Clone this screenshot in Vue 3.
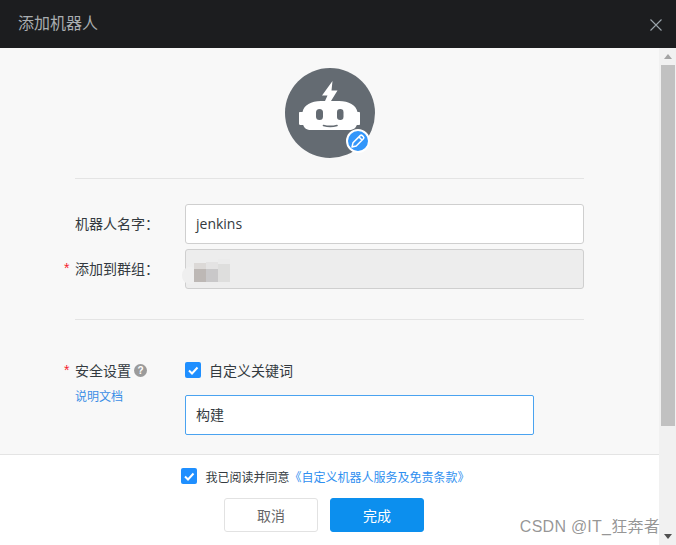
<script setup>
const checkPath = 'M4 8.5l3 3 5.5-6';
</script>

<template>
  <div class="modal">
    <header class="head">
      <span class="title">添加机器人</span>
      <svg class="close" width="14" height="14" viewBox="0 0 14 14">
        <path d="M1.5 1.5l11 11M12.5 1.5l-11 11" stroke="#9aa4ab" stroke-width="1.1" fill="none" />
      </svg>
    </header>
    <div class="frame">
      <div class="main">
        <section class="content">
          <div class="avatar-row">
            <div class="avatar">
              <svg width="90" height="90" viewBox="0 0 90 90">
                <circle cx="45" cy="45" r="45" fill="#646b72" />
                <path d="M47.500 13L37 27.500h5.500L40 33h6l6.500-10.500H46.500z" fill="#fff" />
                <path d="M36 33h18c10 0 17 4 18.500 11H74c.6 0 1 .4 1 1v11c0 .6-.4 1-1 1h-2.200c-.8 3-3.800 5-7.800 5H26c-4 0-7-2-7.800-5H16c-1 0-2-.4-2-1V45c0-.6.4-1 1-1h2.500C19 37 26 33 36 33z" fill="#fff" />
                <rect x="31" y="41" width="7" height="11" rx="3.500" fill="#646b72" />
                <rect x="52" y="41" width="6.500" height="11" rx="3.200" fill="#646b72" />
                <path d="M38.500 57.500c4.500 1.200 9 1.200 13.500 0" stroke="#646b72" stroke-width="1.600" fill="none" stroke-linecap="round" />
              </svg>
              <span class="badge">
                <svg width="16" height="16" viewBox="0 0 16 16">
                  <path d="M2 14l1-4.200 7.200-7.200a1.500 1.500 0 0 1 2.100 0l1.100 1.100a1.500 1.500 0 0 1 0 2.100L6.200 13zM9 4l3 3" stroke="#fff" stroke-width="1.500" fill="none" stroke-linejoin="round" />
                </svg>
              </span>
            </div>
          </div>
          <div class="rule"></div>
          <div class="row first">
            <label class="label">机器人名字：</label>
            <div class="input">jenkins</div>
          </div>
          <div class="row second">
            <label class="label"><i class="star">*</i>添加到群组：</label>
            <div class="input disabled">
              <span class="mosaic">
                <b class="m1"></b><b class="m2"></b><b class="m3"></b>
              </span>
            </div>
          </div>
          <div class="rule lower"></div>
          <div class="security">
            <div class="side">
              <div class="label sec-label">
                <i class="star">*</i>安全设置
                <span class="help">?</span>
              </div>
              <a class="doc">说明文档</a>
            </div>
            <div class="fields">
              <div class="check-line">
                <span class="check">
                  <svg width="16" height="16" viewBox="0 0 16 16"><path :d="checkPath" stroke="#fff" stroke-width="2" fill="none" /></svg>
                </span>
                <span>自定义关键词</span>
              </div>
              <div class="input keyword">构建</div>
            </div>
          </div>
        </section>
        <footer class="foot">
          <div class="agree">
            <span class="check">
              <svg width="16" height="16" viewBox="0 0 16 16"><path :d="checkPath" stroke="#fff" stroke-width="2" fill="none" /></svg>
            </span>
            <span class="agree-text">我已阅读并同意</span>
            <a class="terms">《自定义机器人服务及免责条款》</a>
          </div>
          <div class="btns">
            <button class="btn cancel">取消</button>
            <button class="btn ok">完成</button>
          </div>
        </footer>
      </div>
      <div class="scrollbar">
        <span class="arrow up"></span>
        <span class="thumb"></span>
        <span class="arrow down"></span>
      </div>
    </div>
    <span class="mark">CSDN @IT_狂奔者</span>
  </div>
</template>

<style>
html, body { margin: 0; padding: 0; background: #fff; overflow: hidden; }
</style>

<style scoped>
.modal {
  position: relative;
  width: 676px;
  height: 545px;
  display: flex;
  flex-direction: column;
  overflow: hidden;
  font-family: "Noto Sans CJK SC", "Open Sans", sans-serif;
  font-size: 14px;
  color: #333a40;
}
.head {
  height: 48px;
  flex: none;
  box-sizing: border-box;
  background: #1c1d1f;
  display: flex;
  align-items: center;
  justify-content: space-between;
  padding: 0 13px 0 18px;
}
.title { font-size: 16px; color: #a9adb0; line-height: 44px; margin-bottom: 4px; }
.close { margin-top: 2px; }
.frame { flex: 1; display: flex; min-height: 0; }
.main { flex: 1; display: flex; flex-direction: column; min-width: 0; }
.content {
  height: 407px;
  flex: none;
  box-sizing: border-box;
  background: #f8f8f8;
  border-bottom: 1px solid #e4e4e4;
  padding: 20px 75px 0;
  overflow: hidden;
}
.avatar-row { display: flex; justify-content: center; }
.avatar { position: relative; width: 90px; height: 90px; }
.avatar > svg { display: block; }
.badge {
  position: absolute;
  right: 5px;
  bottom: 5px;
  width: 24px;
  height: 24px;
  box-sizing: border-box;
  border-radius: 50%;
  background: #3296fa;
  border: 2px solid #fff;
  display: flex;
  align-items: center;
  justify-content: center;
}
.rule { height: 1px; background: #e4e4e4; margin-top: 20px; }
.rule.lower { margin-top: 30px; }
.row { display: flex; align-items: center; }
.row.first { margin-top: 25px; }
.row.second { margin-top: 5px; }
.label { position: relative; width: 110px; flex: none; color: #333a40; line-height: 20px; padding-bottom: 2px; white-space: nowrap; }
.star {
  position: absolute;
  left: -11px;
  top: 0;
  color: #f5222d;
  font-style: normal;
  font-family: "Liberation Sans", sans-serif;
  font-size: 14px;
}
.input {
  box-sizing: border-box;
  width: 399px;
  height: 40px;
  line-height: 37px;
  padding: 0 10px;
  background: #fff;
  border: 1px solid #cfcfcf;
  border-radius: 3px;
  color: #333a40;
  font-family: "Open Sans", "Noto Sans CJK SC", sans-serif;
}
.input.disabled { background: #ededed; display: flex; align-items: center; }
.mosaic { position: relative; display: flex; align-items: flex-end; margin-top: 2px; margin-left: -2px; }
.mosaic::before {
  content: "";
  position: absolute;
  left: -12px;
  bottom: -2px;
  width: 16px;
  height: 17px;
  border-radius: 8px;
  background: #efefef;
}
.mosaic b { position: relative; display: block; width: 12px; }
.m1 { height: 19px; background: linear-gradient(#dcd9d7 33%, #bdb8b5 33%); }
.m2 { height: 20px; background: linear-gradient(#e4e3e3 33%, #c9c8c9 33%); }
.m3 { height: 23px; background: linear-gradient(#ebebeb 20%, #dededd 20%); }
.security { display: flex; margin-top: 40px; }
.side { width: 110px; flex: none; }
.sec-label { display: flex; align-items: center; width: auto; }
.help {
  width: 13px;
  height: 13px;
  margin-left: 3px;
  border-radius: 50%;
  background: #9b9b9b;
  color: #fff;
  font-size: 10px;
  font-weight: 700;
  line-height: 13px;
  text-align: center;
  font-family: "Liberation Sans", sans-serif;
}
.doc { display: block; margin-top: 5px; font-size: 12px; line-height: 18px; color: #3a8ee6; }
.fields { flex: 1; }
.check-line { display: flex; align-items: center; gap: 8px; height: 18px; margin-top: 1px; color: #333a40; font-size: 14px; }
.check {
  width: 16px;
  height: 16px;
  flex: none;
  border-radius: 2px;
  background: #1f8fff;
  display: block;
}
.check svg { display: block; }
.input.keyword {
  width: 349px;
  margin-top: 16px;
  border-color: #4aa3f0;
  border-radius: 2px;
}
.foot { flex: 1; background: #fff; display: flex; flex-direction: column; align-items: center; padding-top: 12px; }
.agree { display: flex; align-items: center; height: 18px; font-size: 12px; margin-left: -8px; white-space: nowrap; }
.agree-text { margin-left: 8px; color: #333a40; }
.terms { color: #2f8ff0; }
.btns { display: flex; gap: 12px; margin-top: 13px; margin-left: -11px; }
.btn {
  width: 94px;
  height: 34px;
  box-sizing: border-box;
  border-radius: 3px;
  font-family: inherit;
  font-size: 14px;
  padding: 0;
}
.cancel { background: #fff; border: 1px solid #e2e2e2; color: #666; }
.ok { background: #0c8fee; border: 1px solid #0c8fee; color: #fff; }
.scrollbar {
  width: 17px;
  flex: none;
  background: #f1f1f1;
  display: flex;
  flex-direction: column;
  align-items: center;
  padding-top: 6px;
  padding-bottom: 6px;
  box-sizing: border-box;
}
.arrow { width: 0; height: 0; flex: none; border-left: 4px solid transparent; border-right: 4px solid transparent; }
.up { border-bottom: 5px solid #a3a3a3; }
.down { border-top: 5px solid #505050; margin-top: auto; }
.thumb { width: 14px; height: 361px; margin-top: 6px; flex: none; background: #c1c1c1; }
.mark {
  position: absolute;
  right: 16px;
  bottom: 8px;
  font-size: 16px;
  letter-spacing: 0.25px;
  color: rgba(110, 110, 110, 0.72);
  font-family: "Liberation Sans", "Noto Sans CJK SC", sans-serif;
}
</style>
